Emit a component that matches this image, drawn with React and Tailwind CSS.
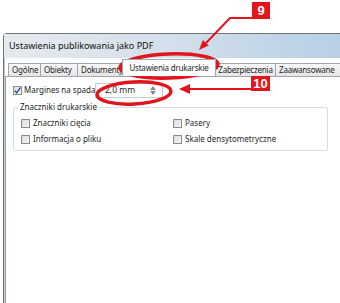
import React from 'react';

const TABS = [
  { label: 'Ogólne', w: 'w-[33px]' },
  { label: 'Obiekty', w: 'w-[38px]' },
  { label: 'Dokumenty', w: 'w-[48px]' },
];

function CheckBox({ checked }) {
  return (
    <span className="relative inline-block w-[9px] h-[9px] border border-[#8e8f8f] bg-gradient-to-br from-[#dcdcdc] to-[#f6f6f6] shrink-0">
      {checked && (
        <svg className="absolute -left-[1px] -top-[1px]" width="9" height="9" viewBox="0 0 9 9">
          <path d="M1.8 4.6 L3.7 6.8 L7.4 1.6" fill="none" stroke="#2a4f8f" strokeWidth="1.4" />
        </svg>
      )}
    </span>
  );
}

function Option({ label }) {
  return (
    <div className="flex items-center gap-[3px] h-[16px]">
      <CheckBox />
      <span>{label}</span>
    </div>
  );
}

function Annotations() {
  return (
    <svg className="absolute inset-0 pointer-events-none" width="340" height="303" viewBox="0 0 340 303">
      <ellipse cx="169" cy="66" rx="49" ry="12" fill="none" stroke="#e3141c" strokeWidth="3.5" transform="rotate(-2 169 66)" />
      <ellipse cx="134" cy="93" rx="37" ry="11" fill="none" stroke="#e3141c" strokeWidth="3.5" transform="rotate(-3 134 93)" />
      <polyline points="253,18 230,18 206,43" fill="none" stroke="#e3141c" strokeWidth="2" />
      <polygon points="199,50 202.9,40 208.7,45.4" fill="#e3141c" />
      <line x1="252" y1="89" x2="188" y2="89" stroke="#e3141c" strokeWidth="2" />
      <polygon points="179,89 190,84 190,94" fill="#e3141c" />
    </svg>
  );
}

const tabBase =
  'h-[13px] shrink-0 border border-b-0 border-[#9da8b3] -ml-[1px] bg-gradient-to-b from-[#f7f7f7] to-[#e6e6e6] flex items-center whitespace-nowrap tracking-[-0.2px]';

export default function App() {
  return (
    <div className="relative w-[340px] h-[303px] overflow-hidden bg-white font-['Noto_Sans',sans-serif] text-[8px] text-[#1e1e1e]">
      <div className="pt-[33px] pl-[3px]">
        <div className="border-l border-t border-[#6f7479] rounded-tl-[4px] h-[280px] flex flex-col">
          <div className="h-[24px] flex items-center pl-[5px] bg-gradient-to-r from-[#e6eaee] via-[#d3dfea] to-[#b8cfe5] text-[9px] text-[#111]">
            Ustawienia publikowania jako PDF
          </div>
          <div className="flex flex-1">
            <div className="w-[7px] bg-[#e4ebf2] border-r border-[#b9c8d4]" />
            <div className="flex-1 flex flex-col bg-white">
              <div className="h-[17px] mt-[1px] flex items-end pl-[3px] relative">
                {TABS.map((t, i) => (
                  <div key={t.label} className={`${t.w} ${tabBase} ${i === 0 ? 'ml-0' : ''} pl-[3px]`}>
                    {t.label}
                  </div>
                ))}
                <div className="w-[94px] h-[17px] shrink-0 border border-b-0 border-[#9da8b3] -ml-[3px] bg-white flex items-center justify-center whitespace-nowrap relative z-10 tracking-[-0.2px]">
                  Ustawienia drukarskie
                </div>
                <div className={`w-[61px] ${tabBase} justify-center`}>Zabezpieczenia</div>
                <div className={`w-[70px] ${tabBase} pl-[3px]`}>Zaawansowane</div>
              </div>
              <div className="flex-1 border-t border-l border-[#9da8b3] pl-[7px] pr-[6px]">
                <div className="flex items-center h-[22px] mt-[2px]">
                  <div className="flex items-center gap-[2px] w-[82px] whitespace-nowrap">
                    <CheckBox checked />
                    <span>Margines na spada</span>
                  </div>
                  <div className="w-[68px] h-[15px] border border-[#c5cdd4] flex items-center justify-between pl-[9px] pr-[6px] bg-white">
                    <span className="text-[8.5px]">2,0 mm</span>
                    <div className="flex flex-col items-center leading-none">
                      <svg width="6" height="4" viewBox="0 0 6 4"><path d="M0 4 L3 0 L6 4 Z" fill="#7d8a96" /></svg>
                      <svg className="mt-[1px]" width="6" height="4" viewBox="0 0 6 4"><path d="M0 0 L3 4 L6 0 Z" fill="#7d8a96" /></svg>
                    </div>
                  </div>
                </div>
                <div className="relative mt-[6px] w-[315px] h-[44px] border border-[#d7dee4] rounded-[2px]">
                  <span className="absolute -top-[7px] left-[4px] px-[2px] bg-white">Znaczniki drukarskie</span>
                  <div className="grid grid-cols-[152px_1fr] pl-[7px] pt-[7px]">
                    <Option label="Znaczniki cięcia" />
                    <Option label="Pasery" />
                    <Option label="Informacja o pliku" />
                    <Option label="Skale densytometryczne" />
                  </div>
                </div>
              </div>
            </div>
          </div>
        </div>
      </div>
      <div className="absolute left-[252px] top-[2px] w-[18px] h-[17px] bg-[#e3141c] text-white font-['Liberation_Sans',sans-serif] font-bold text-[13px] flex items-center justify-center leading-none">
        9
      </div>
      <div className="absolute left-[251px] top-[76px] w-[19px] h-[15px] bg-[#e3141c] text-white font-['Liberation_Sans',sans-serif] font-bold text-[13px] flex items-center justify-center leading-none">
        10
      </div>
      <Annotations />
    </div>
  );
}
